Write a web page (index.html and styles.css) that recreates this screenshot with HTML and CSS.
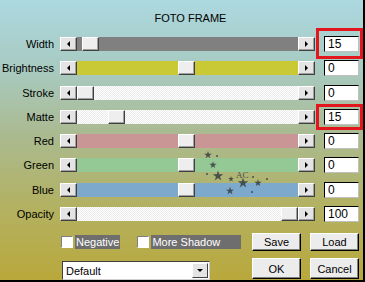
FILE: index.html
```html
<!doctype html>
<html lang="en">
<head>
    <meta charset="UTF-8">
    <title>Foto Frame</title>
    <link rel="stylesheet" href="styles.css">
</head>
<body>
    <div class="window">
        <div class="title">FOTO FRAME</div>

        <div class="rows">
            <div class="row">
                <div class="label">Width</div>
                <div class="slider">
                    <span class="arr left"></span>
                    <div class="track gray"><span class="thumb" style="left:5px"></span></div>
                    <span class="arr right"></span>
                </div>
                <div class="val">15</div>
            </div>
            <div class="row">
                <div class="label">Brightness</div>
                <div class="slider">
                    <span class="arr left"></span>
                    <div class="track yellow"><span class="thumb" style="left:101px"></span></div>
                    <span class="arr right"></span>
                </div>
                <div class="val">0</div>
            </div>
            <div class="row">
                <div class="label">Stroke</div>
                <div class="slider">
                    <span class="arr left"></span>
                    <div class="track white"><span class="thumb" style="left:0px"></span></div>
                    <span class="arr right"></span>
                </div>
                <div class="val">0</div>
            </div>
            <div class="row">
                <div class="label">Matte</div>
                <div class="slider">
                    <span class="arr left"></span>
                    <div class="track white"><span class="thumb" style="left:31px"></span></div>
                    <span class="arr right"></span>
                </div>
                <div class="val">15</div>
            </div>
            <div class="row">
                <div class="label">Red</div>
                <div class="slider">
                    <span class="arr left"></span>
                    <div class="track red"><span class="thumb" style="left:101px"></span></div>
                    <span class="arr right"></span>
                </div>
                <div class="val">0</div>
            </div>
            <div class="row">
                <div class="label">Green</div>
                <div class="slider">
                    <span class="arr left"></span>
                    <div class="track green"><span class="thumb" style="left:101px"></span></div>
                    <span class="arr right"></span>
                </div>
                <div class="val">0</div>
            </div>
            <div class="row">
                <div class="label">Blue</div>
                <div class="slider">
                    <span class="arr left"></span>
                    <div class="track blue"><span class="thumb" style="left:101px"></span></div>
                    <span class="arr right"></span>
                </div>
                <div class="val">0</div>
            </div>
            <div class="row">
                <div class="label">Opacity</div>
                <div class="slider">
                    <span class="arr left"></span>
                    <div class="track white"><span class="thumb" style="left:204px"></span></div>
                    <span class="arr right"></span>
                </div>
                <div class="val">100</div>
            </div>
        </div>

        <div class="bottom">
            <div class="checks">
                <span class="box"></span><span class="chk-label">Negative</span>
                <span class="box second"></span><span class="chk-label wide">More Shadow</span>
            </div>
            <button class="btn">Save</button>
            <button class="btn">Load</button>
            <div class="select">
                <span class="select-text">Default</span>
                <span class="select-arr"></span>
            </div>
            <button class="btn">OK</button>
            <button class="btn">Cancel</button>
        </div>

        <!-- watermark -->
        <svg class="stars" width="80" height="52" viewBox="0 0 80 52">
            <defs>
                <polygon id="star" points="0,-1 0.2245,-0.309 0.951,-0.309 0.363,0.118 0.588,0.809 0,0.382 -0.588,0.809 -0.363,0.118 -0.951,-0.309 -0.2245,-0.309"/>
            </defs>
            <g fill="#363f44" opacity="0.85">
                <use href="#star" transform="translate(13 7) scale(4)"/>
                <circle cx="22" cy="8" r="1"/>
                <use href="#star" transform="translate(18 17) scale(3.8)"/>
                <circle cx="12" cy="26" r="1"/>
                <use href="#star" transform="translate(23 28) scale(5.5)"/>
                <use href="#star" transform="translate(36 31) scale(3)"/>
                <use href="#star" transform="translate(48 35) scale(5.5)"/>
                <use href="#star" transform="translate(63 35) scale(3.8)"/>
                <use href="#star" transform="translate(35 43) scale(4.2)"/>
                <circle cx="57" cy="44" r="1"/>
                <circle cx="72" cy="31" r="1"/>
                <circle cx="58" cy="29" r="1"/>
                <text x="41" y="30" font-family="Liberation Serif, serif" font-size="9">AC</text>
            </g>
        </svg>

        <div class="mark mark-width"></div>
        <div class="mark mark-matte"></div>
    </div>
</body>
</html>
```

FILE: styles.css
```css
* {
    box-sizing: border-box;
}
html, body {
    margin: 0;
}
body {
    width: 365px;
    height: 282px;
    overflow: hidden;
    font-family: "Liberation Sans", Arial, sans-serif;
    font-size: 11px;
    color: #000;
}
.window {
    position: relative;
    width: 365px;
    height: 282px;
    background: linear-gradient(#acd8e0 0, #a8cac0 70px, #aaba90 135px, #b2b266 200px, #b9a83a 282px);
    border-right: 2px solid #000;
    border-bottom: 2px solid #000;
}
.title {
    height: 36px;
    padding: 12px 0 0 18px;
    text-align: center;
    line-height: 13px;
}
.row {
    display: flex;
    align-items: center;
    height: 16px;
    margin-bottom: 8.3px;
}
.row:last-child {
    margin-bottom: 0;
}
.label {
    width: 54px;
    margin-right: 6px;
    text-align: right;
}
.slider {
    display: flex;
    width: 255px;
    height: 14px;
}
.arr, .thumb {
    width: 17px;
    height: 14px;
    background: #e4e4e4;
    border: 1px solid;
    border-color: #fff #404040 #404040 #fff;
    box-shadow: inset -1px -1px #a0a0a0;
}
.arr {
    position: relative;
    flex: none;
}
.arr::after {
    content: "";
    position: absolute;
    top: 3px;
    left: 6px;
    border-top: 3px solid transparent;
    border-bottom: 3px solid transparent;
}
.arr.left::after {
    border-right: 3px solid #000;
}
.arr.right::after {
    border-left: 3px solid #000;
}
.track {
    position: relative;
    flex: 1;
}
.thumb {
    position: absolute;
    top: 0;
    background: #eeeeee;
}
.gray { background: #808080; }
.yellow { background: #c9c935; }
.red { background: #c99595; }
.green { background: #94c894; }
.blue { background: #7da9cc; }
.white {
    background: repeating-conic-gradient(#ffffff 0 25%, #ebebeb 0 50%) 0 0 / 2px 2px;
}
.val {
    width: 35px;
    height: 16px;
    margin-left: 9px;
    padding-left: 3px;
    background: #fff;
    border: 1px solid;
    border-color: #000 #c0c0c0 #c0c0c0 #000;
    font-size: 12px;
    line-height: 14px;
}
.bottom {
    display: grid;
    grid-template-columns: 183px 49px 49px;
    grid-template-rows: 18px 21px;
    column-gap: 9px;
    row-gap: 7px;
    margin-top: 11px;
    padding-left: 60px;
}
.checks {
    display: flex;
    align-items: center;
}
.box {
    width: 12px;
    height: 12px;
    margin-left: 1px;
    background: #fff;
    border: 1px solid;
    border-color: #808080 #fff #fff #808080;
}
.box.second {
    margin-left: 17px;
}
.chk-label {
    height: 14px;
    margin-left: 2px;
    padding: 0 1px;
    background: #6e6e6e;
    color: #fff;
    line-height: 14px;
}
.chk-label.wide {
    width: 90px;
}
.btn {
    padding: 0;
    background: #ececec;
    border: 1px solid;
    border-color: #fff #000 #000 #fff;
    box-shadow: inset -1px -1px #808080;
    font-family: inherit;
    font-size: 11px;
    color: #000;
}
.select {
    display: flex;
    align-items: center;
    width: 148px;
    height: 19px;
    margin: 3px 0 0 2px;
    background: #fff;
    border: 1px solid;
    border-color: #404040 #d0d0d0 #d0d0d0 #404040;
}
.select-text {
    flex: 1;
    padding-left: 3px;
}
.select-arr {
    position: relative;
    width: 16px;
    height: 15px;
    margin-right: 1px;
    background: #e4e4e4;
    border: 1px solid;
    border-color: #fff #404040 #404040 #fff;
}
.select-arr::after {
    content: "";
    position: absolute;
    top: 5px;
    left: 4px;
    border-left: 3px solid transparent;
    border-right: 3px solid transparent;
    border-top: 3px solid #000;
}
.stars {
    position: absolute;
    left: 195px;
    top: 148px;
}
.mark {
    position: absolute;
    left: 316px;
    width: 47px;
    border: 3px solid #e3161d;
}
.mark-width {
    top: 28px;
    height: 31px;
}
.mark-matte {
    top: 104px;
    height: 26px;
}
```
